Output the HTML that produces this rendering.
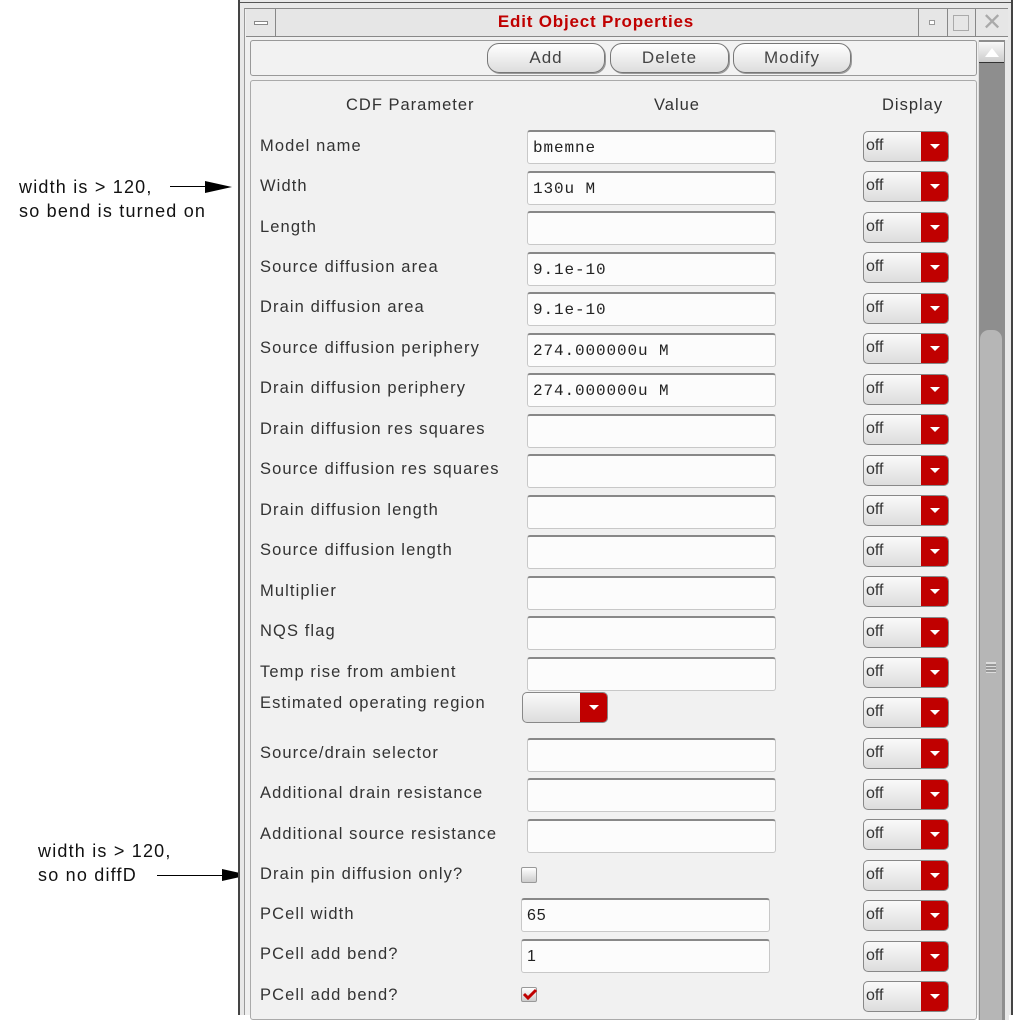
<!DOCTYPE html>
<html><head><meta charset="utf-8"><style>
*{margin:0;padding:0;box-sizing:border-box}
body{width:1013px;height:1015px;background:#fff;position:relative;overflow:hidden;font-family:"Liberation Sans",sans-serif}
.a{position:absolute}
.ann{position:absolute;font-size:18px;color:#111;line-height:24px;letter-spacing:1.2px}
.lbl{position:absolute;left:260px;font-size:16.5px;color:#333;letter-spacing:1.1px;white-space:nowrap}
.tf{position:absolute;left:527px;width:249px;height:34px;background:#fcfcfc;border:1px solid #c8c8c8;border-top:2px solid #888;border-radius:3px;font-family:"Liberation Mono",monospace;font-size:16px;color:#222;padding:7px 0 0 5px;letter-spacing:0.9px}
.dd{position:absolute;left:863px;width:86px;height:31px;border:1px solid #888;border-radius:5px;background:linear-gradient(#fafafa,#ddd);font-size:16px;color:#333;padding:5px 0 0 2px;overflow:hidden}
.dd::after{content:"";position:absolute;right:0;top:0;width:27px;height:100%;background:#c00000}
.dd i{position:absolute;right:8px;top:12px;width:0;height:0;border-left:5px solid transparent;border-right:5px solid transparent;border-top:5px solid #fff;z-index:2}
.btn{position:absolute;top:43px;height:30px;border:1px solid #777;border-radius:12px;background:linear-gradient(#fff,#ddd);font-size:17px;color:#444;text-align:center;padding-top:4px;box-shadow:1px 1px 0 #999;letter-spacing:1px}
.hd{position:absolute;top:96px;font-size:16.5px;color:#333;letter-spacing:1px}
</style></head><body>
<div class="ann" style="left:19px;top:175px">width is &gt; 120,<br>so bend is turned on</div>
<div class="a" style="left:170px;top:186px;width:40px;height:1px;background:#000"></div>
<svg class="a" style="left:205px;top:180px" width="28" height="14"><polygon points="0,1 27,7 0,13" fill="#000"/></svg>
<div class="ann" style="left:38px;top:839px">width is &gt; 120,<br>so no diffD</div>
<div class="a" style="left:157px;top:875px;width:70px;height:1px;background:#000"></div>
<svg class="a" style="left:222px;top:868px" width="28" height="14"><polygon points="0,1 27,7 0,13" fill="#000"/></svg>

<div class="a" style="left:238px;top:0;width:775px;height:1015px;background:#e8e8e8;border-left:2px solid #444;border-right:2px solid #444"></div>
<div class="a" style="left:240px;top:2px;width:771px;height:1px;background:#555"></div>
<div class="a" style="left:244px;top:8px;width:764px;height:1007px;background:#f0f0f0;border-left:1px solid #999;border-top:1px solid #888"></div>
<div class="a" style="left:246px;top:9px;width:762px;height:28px;background:#e6e6e6;border-bottom:1px solid #888"></div>
<div class="a" style="left:246px;top:9px;width:30px;height:28px;border-right:1px solid #888"></div>
<div class="a" style="left:254px;top:21px;width:14px;height:4px;border:1px solid #888;background:#fff"></div>
<div class="a" style="left:396px;top:12px;width:400px;text-align:center;font-size:17px;font-weight:bold;color:#c00000;letter-spacing:0.8px">Edit Object Properties</div>
<div class="a" style="left:918px;top:9px;width:29px;height:28px;border-left:1px solid #888"></div>
<div class="a" style="left:929px;top:20px;width:6px;height:5px;border:1px solid #999;background:#fff"></div>
<div class="a" style="left:947px;top:9px;width:28px;height:28px;border-left:1px solid #888"></div>
<div class="a" style="left:953px;top:15px;width:16px;height:16px;border:1px solid #aaa"></div>
<div class="a" style="left:975px;top:9px;width:33px;height:28px;border-left:1px solid #888;color:#aaa;font-size:24px;text-align:center;line-height:28px">✕</div>
<div class="a" style="left:250px;top:40px;width:727px;height:36px;border:1px solid #999;border-radius:3px;background:#f2f2f2"></div>
<div class="btn" style="left:487px;width:118px">Add</div>
<div class="btn" style="left:610px;width:119px">Delete</div>
<div class="btn" style="left:733px;width:118px">Modify</div>
<div class="a" style="left:250px;top:80px;width:727px;height:940px;border:1px solid #aaa;border-radius:3px;background:#f1f1f1"></div>
<div class="a" style="left:978px;top:40px;width:27px;height:980px;background:#8e8e8e;border-left:1px solid #ddd"></div>
<div class="a" style="left:979px;top:42px;width:25px;height:21px;background:linear-gradient(#f8f8f8,#ccc);border-bottom:1px solid #333"></div>
<svg class="a" style="left:984px;top:46px" width="16" height="12"><polygon points="8,2 15,11 1,11" fill="#fff"/></svg>
<div class="a" style="left:980px;top:330px;width:22px;height:690px;background:#b6b6b6;border-radius:9px 9px 0 0"></div>
<div class="a" style="left:986px;top:662px;width:10px;height:11px;border-top:1px solid #ddd;background:repeating-linear-gradient(#ddd 0 1px,#999 1px 3px)"></div>
<div class="a" style="left:1005px;top:40px;width:4px;height:980px;background:#e8e8e8"></div>

<div class="hd" style="left:346px">CDF Parameter</div>
<div class="hd" style="left:654px">Value</div>
<div class="hd" style="left:882px">Display</div>

<div class="lbl" style="top:137px">Model name</div><div class="tf" style="top:130px">bmemne</div><div class="dd" style="top:131px">off<i></i></div>
<div class="lbl" style="top:177px">Width</div><div class="tf" style="top:171px">130u M</div><div class="dd" style="top:171px">off<i></i></div>
<div class="lbl" style="top:218px">Length</div><div class="tf" style="top:211px"></div><div class="dd" style="top:212px">off<i></i></div>
<div class="lbl" style="top:258px">Source diffusion area</div><div class="tf" style="top:252px">9.1e-10</div><div class="dd" style="top:252px">off<i></i></div>
<div class="lbl" style="top:298px">Drain diffusion area</div><div class="tf" style="top:292px">9.1e-10</div><div class="dd" style="top:293px">off<i></i></div>
<div class="lbl" style="top:339px">Source diffusion periphery</div><div class="tf" style="top:333px">274.000000u M</div><div class="dd" style="top:333px">off<i></i></div>
<div class="lbl" style="top:379px">Drain diffusion periphery</div><div class="tf" style="top:373px">274.000000u M</div><div class="dd" style="top:374px">off<i></i></div>
<div class="lbl" style="top:420px">Drain diffusion res squares</div><div class="tf" style="top:414px"></div><div class="dd" style="top:414px">off<i></i></div>
<div class="lbl" style="top:460px">Source diffusion res squares</div><div class="tf" style="top:454px"></div><div class="dd" style="top:455px">off<i></i></div>
<div class="lbl" style="top:501px">Drain diffusion length</div><div class="tf" style="top:495px"></div><div class="dd" style="top:495px">off<i></i></div>
<div class="lbl" style="top:541px">Source diffusion length</div><div class="tf" style="top:535px"></div><div class="dd" style="top:536px">off<i></i></div>
<div class="lbl" style="top:582px">Multiplier</div><div class="tf" style="top:576px"></div><div class="dd" style="top:576px">off<i></i></div>
<div class="lbl" style="top:622px">NQS flag</div><div class="tf" style="top:616px"></div><div class="dd" style="top:617px">off<i></i></div>
<div class="lbl" style="top:663px">Temp rise from ambient</div><div class="tf" style="top:657px"></div><div class="dd" style="top:657px">off<i></i></div>
<div class="lbl" style="top:694px">Estimated operating region</div>
<div class="dd" style="left:522px;top:692px;width:86px"><i></i></div><div class="dd" style="top:697px">off<i></i></div>
<div class="lbl" style="top:744px">Source/drain selector</div><div class="tf" style="top:738px"></div><div class="dd" style="top:738px">off<i></i></div>
<div class="lbl" style="top:784px">Additional drain resistance</div><div class="tf" style="top:778px"></div><div class="dd" style="top:779px">off<i></i></div>
<div class="lbl" style="top:825px">Additional source resistance</div><div class="tf" style="top:819px"></div><div class="dd" style="top:819px">off<i></i></div>
<div class="lbl" style="top:865px">Drain pin diffusion only?</div>
<div class="a" style="left:521px;top:867px;width:16px;height:16px;border:1px solid #999;border-radius:2px;background:linear-gradient(#fff,#ccc)"></div>
<div class="dd" style="top:860px">off<i></i></div>
<div class="lbl" style="top:905px">PCell width</div><div class="tf" style="left:521px;top:898px;font-family:'Liberation Sans',sans-serif">65</div><div class="dd" style="top:900px">off<i></i></div>
<div class="lbl" style="top:945px">PCell add bend?</div><div class="tf" style="left:521px;top:939px;font-family:'Liberation Sans',sans-serif">1</div><div class="dd" style="top:941px">off<i></i></div>
<div class="lbl" style="top:986px">PCell add bend?</div>
<div class="a" style="left:521px;top:987px;width:16px;height:15px;border:1px solid #999;border-radius:2px;background:linear-gradient(#fff,#ccc)"></div>
<svg class="a" style="left:522px;top:986px" width="16" height="14"><path d="M2,8 L6,12 L14,4" stroke="#c00000" stroke-width="3" fill="none"/></svg>
<div class="dd" style="top:981px">off<i></i></div>
</body></html>
